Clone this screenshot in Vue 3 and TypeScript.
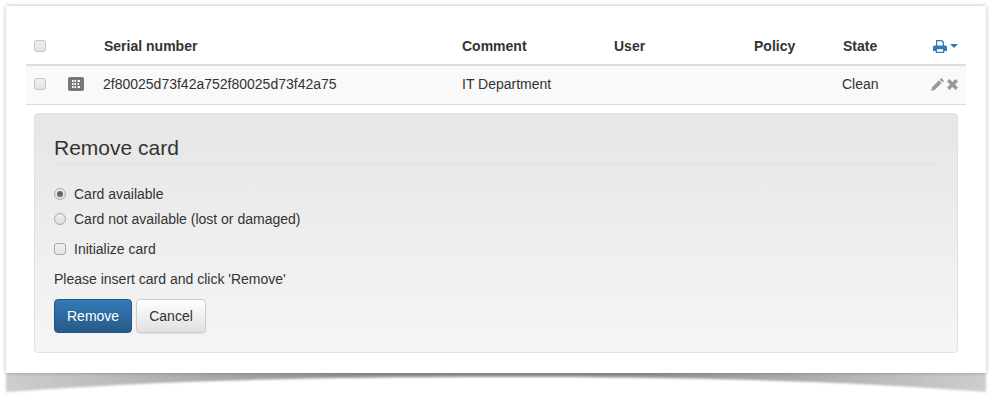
<script setup lang="ts">
const columns: string[] = ['Serial number', 'Comment', 'User', 'Policy', 'State']
</script>

<template>
  <div class="page">
    <svg class="curl" width="1000" height="402" viewBox="0 0 1000 402" aria-hidden="true">
      <defs>
        <linearGradient id="sh" x1="0" y1="0" x2="1" y2="0">
          <stop offset="0" stop-color="#cecece" />
          <stop offset="0.15" stop-color="#b4b4b4" />
          <stop offset="0.35" stop-color="#939393" />
          <stop offset="0.65" stop-color="#939393" />
          <stop offset="0.85" stop-color="#b4b4b4" />
          <stop offset="1" stop-color="#cecece" />
        </linearGradient>
        <filter id="bl" x="-2%" y="-30%" width="104%" height="160%">
          <feGaussianBlur stdDeviation="1" />
        </filter>
      </defs>
      <path d="M6 370 H986 V392 C850 381 700 377 500 377 C300 377 150 381 6 392 Z" fill="url(#sh)" filter="url(#bl)" />
    </svg>
    <main class="card">
      <section class="table">
        <div class="row head">
          <span class="cell"><span class="box"></span></span>
          <span class="cell"></span>
          <b v-for="c in columns" :key="c" :class="['title', { nudge: c === 'Serial number' || c === 'State' }]">{{ c }}</b>
          <span class="actions">
            <svg width="14" height="13" viewBox="0 0 14 13"><path fill="#337ab7" d="M3 0h6l2 2v3.500H9.800V2.800L8.400 1.300H4.200v4.200H3zM1.600 5.500h10.800A1.600 1.600 0 0 1 14 7.100V11h-2.700v2H2.700v-2H0V7.100a1.600 1.600 0 0 1 1.600-1.600zM4 9.200v2.600h6V9.200z" /></svg>
            <i class="caret"></i>
          </span>
        </div>
        <div class="row body">
          <span class="cell"><span class="box"></span></span>
          <span class="cell">
            <svg width="16" height="14" viewBox="0 0 16 14"><rect width="16" height="14" rx="2" fill="#777" /><path fill="#fff" d="M4 3h1.600v2H4zM6.400 3H8v2H6.400zM4 6h1.600v2H4zM6.400 6H8v2H6.400zM4 9h1.600v2H4zM6.400 9H8v2H6.400zM9.500 3H12v2H9.500zM9.500 6H11v2H9.500zM9.500 9H12v2H9.500z" /></svg>
          </span>
          <span class="serial">2f80025d73f42a752f80025d73f42a75</span>
          <span class="comment">IT Department</span>
          <span></span>
          <span></span>
          <span class="state">Clean</span>
          <span class="tools">
            <svg width="13" height="13" viewBox="0 0 13 13"><path fill="#999" d="M10.300 0L13 2.700l-1.500 1.500L8.800 1.500zM8 2.300L10.700 5 4 11.700 0 13l1.300-4z" /></svg>
            <svg width="11" height="11" viewBox="0 0 11 11"><path fill="#999" d="M2.400 0L5.500 3.100 8.600 0 11 2.400 7.900 5.500 11 8.600 8.600 11 5.500 7.900 2.400 11 0 8.600 3.100 5.500 0 2.400z" /></svg>
          </span>
        </div>
      </section>
      <section class="panel">
        <h2>Remove card</h2>
        <div class="option first"><span class="radio on"></span>Card available</div>
        <div class="option second"><span class="radio"></span>Card not available (lost or damaged)</div>
        <div class="option third"><span class="box strong"></span>Initialize card</div>
        <p>Please insert card and click 'Remove'</p>
        <div class="buttons">
          <button class="primary" type="button">Remove</button>
          <button class="secondary" type="button">Cancel</button>
        </div>
      </section>
    </main>
  </div>
</template>

<style>
html, body { margin: 0; background: #fff; }
</style>

<style scoped>
.page {
  position: relative;
  width: 1000px;
  height: 402px;
  padding: 6px 14px 0 6px;
  box-sizing: border-box;
  overflow: hidden;
  background: #fff;
  color: #333;
  font: 14px/20px "Liberation Sans", Arial, sans-serif;
}
.curl { position: absolute; left: 0; top: 0; }
.card {
  position: relative;
  width: 980px;
  height: 367px;
  box-sizing: border-box;
  padding: 22px 20px 0;
  background: #fff;
  box-shadow: 0 0 4px rgba(0, 0, 0, .28);
}
.row {
  display: grid;
  grid-template-columns: 34px 43px 359px 152px 140px 88px 88px 1fr;
  align-items: center;
}
.head { height: 36px; border-bottom: 2px solid #ddd; box-sizing: content-box; }
.body { height: 39px; padding-bottom: 2px; box-sizing: border-box; background: #f9f9f9; border-bottom: 1px solid #ddd; }
.title { position: relative; }
.nudge { left: 1px; }
.cell { display: flex; align-items: center; padding-left: 8px; }
.cell svg { display: block; }
.box {
  display: block;
  flex: none;
  width: 10px;
  height: 10px;
  border: 1px solid #c4c4c4;
  border-radius: 3px;
  background: linear-gradient(#efefef, #e4e4e4);
}
.strong { border-color: #a8a8a8; }
.actions { display: flex; align-items: center; gap: 3px; padding-left: 3px; }
.caret {
  width: 0;
  height: 0;
  border-top: 4px solid #337ab7;
  border-left: 4px solid transparent;
  border-right: 4px solid transparent;
}
.tools { display: flex; align-items: center; gap: 3px; padding-left: 1px; }
.panel {
  margin: 8px 8px 0;
  height: 240px;
  box-sizing: border-box;
  padding: 19px 19px 0;
  border: 1px solid #e0e0e0;
  border-radius: 4px;
  background: linear-gradient(#e6e6e6, #f5f5f5);
}
h2 {
  margin: 0;
  height: 31px;
  border-bottom: 1px solid #e3e3e3;
  font-size: 21px;
  font-weight: 400;
  line-height: 30px;
}
.option { display: flex; align-items: center; gap: 8px; height: 20px; }
.first { margin-top: 19px; }
.second { margin-top: 5px; }
.third { margin-top: 10px; }
.radio {
  position: relative;
  flex: none;
  width: 10px;
  height: 10px;
  border: 1px solid #aaa;
  border-radius: 50%;
  background: linear-gradient(#efefef, #ddd);
}
.on::after {
  content: "";
  position: absolute;
  left: 2px;
  top: 2px;
  width: 6px;
  height: 6px;
  border-radius: 50%;
  background: #666;
}
p { margin: 10px 0 0; }
.buttons { display: flex; gap: 4px; margin-top: 10px; }
button {
  height: 34px;
  border-radius: 4px;
  font: 14px/20px "Liberation Sans", Arial, sans-serif;
  padding: 0 12px;
}
.primary {
  width: 78px;
  border: 1px solid #245580;
  color: #fff;
  background: linear-gradient(#337ab7, #265a88);
}
.secondary {
  width: 70px;
  border: 1px solid #ccc;
  color: #333;
  background: linear-gradient(#fff, #e0e0e0);
  box-shadow: 0 1px 1px rgba(0, 0, 0, .08);
}
</style>
